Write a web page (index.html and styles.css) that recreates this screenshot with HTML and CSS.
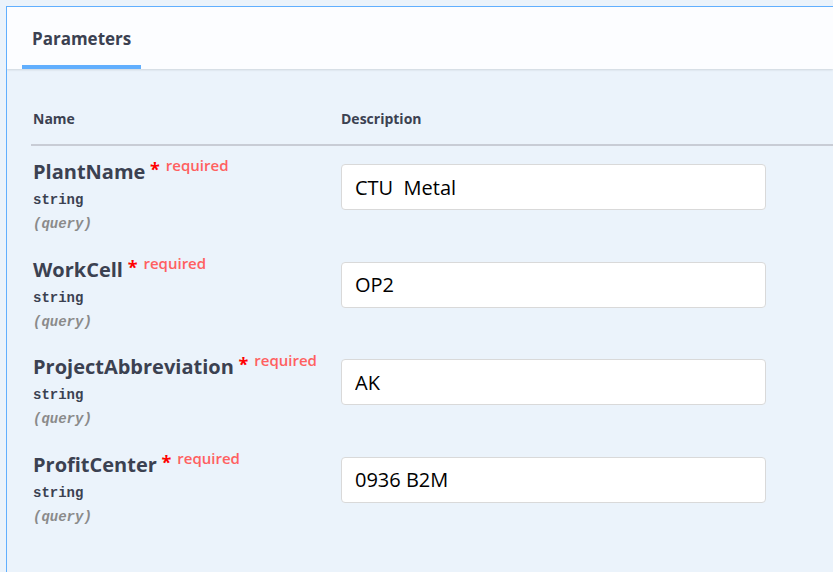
FILE: index.html
```html
<!DOCTYPE html>
<html>
<head>
<meta charset="utf-8">
<link rel="stylesheet" href="styles.css">
</head>
<body>
<div class="opblock">
  <div class="section-header">
    <div class="tab">Parameters</div>
  </div>
  <div class="params">
    <div class="thead">
      <div class="col-name">Name</div>
      <div class="col-desc">Description</div>
    </div>
    <div class="row">
      <div class="col-name">
        <div class="pname">PlantName<span class="star">&nbsp;*</span><span class="req">required</span></div>
        <div class="ptype">string</div>
        <div class="pin">(query)</div>
      </div>
      <div class="col-desc"><input class="field" type="text" value="CTU  Metal"></div>
    </div>
    <div class="row">
      <div class="col-name">
        <div class="pname">WorkCell<span class="star">&nbsp;*</span><span class="req">required</span></div>
        <div class="ptype">string</div>
        <div class="pin">(query)</div>
      </div>
      <div class="col-desc"><input class="field" type="text" value="OP2"></div>
    </div>
    <div class="row">
      <div class="col-name">
        <div class="pname">ProjectAbbreviation<span class="star">&nbsp;*</span><span class="req">required</span></div>
        <div class="ptype">string</div>
        <div class="pin">(query)</div>
      </div>
      <div class="col-desc"><input class="field" type="text" value="AK"></div>
    </div>
    <div class="row">
      <div class="col-name">
        <div class="pname">ProfitCenter<span class="star">&nbsp;*</span><span class="req">required</span></div>
        <div class="ptype">string</div>
        <div class="pin">(query)</div>
      </div>
      <div class="col-desc"><input class="field" type="text" value="0936 B2M"></div>
    </div>
  </div>
</div>
</body>
</html>
```
FILE: styles.css
```css
html, body {
  margin: 0;
  padding: 0;
  background: #ebf3fb;
  font-family: "Open Sans", "Noto Sans", sans-serif;
  color: #3b4151;
  overflow: hidden;
}
body {
  padding: 6px 0 0 6px;
  height: 572px;
  box-sizing: border-box;
}
.opblock {
  border-left: 1px solid #61affe;
  border-top: 1px solid #61affe;
  background: #ebf3fb;
  height: 100%;
  box-sizing: border-box;
  overflow: hidden;
}
.section-header {
  background: #fcfdff;
  height: 62px;
  box-shadow: 0 1px 2px rgba(0, 0, 0, 0.12);
  padding-left: 15px;
  display: flex;
  align-items: flex-end;
  position: relative;
}
.tab {
  font-size: 17px;
  font-weight: 700;
  padding: 0 10px 15px 10px;
  border-bottom: 4px solid #61affe;
  line-height: 22px;
}
.params {
  padding: 0 0 0 24px;
}
.thead {
  display: flex;
  height: 77px;
  align-items: flex-end;
  border-bottom: 2px solid #c8ccd5;
  font-size: 14px;
  font-weight: 700;
  box-sizing: border-box;
}
.thead > div {
  padding-bottom: 15px;
  line-height: 20px;
}
.col-name {
  width: 308px;
  padding-left: 2px;
  flex: none;
}
.col-desc {
  flex: 1;
}
.row {
  display: flex;
  height: 97.6px;
  padding-top: 14px;
  box-sizing: border-box;
}
.pname {
  font-size: 20px;
  font-weight: 700;
  line-height: 24px;
}
.star {
  color: #ff0000;
  font-size: 18px;
  position: relative;
  top: -3px;
}
.req {
  color: #ff6060;
  font-size: 15px;
  font-weight: 600;
  position: relative;
  top: -8px;
  margin-left: 6px;
}
.ptype {
  font-family: "Liberation Mono", "DejaVu Sans Mono", monospace;
  font-size: 14px;
  font-weight: 700;
  line-height: 24px;
  margin-top: 3px;
  color: #3b4151;
}
.pin {
  font-family: "Liberation Mono", "DejaVu Sans Mono", monospace;
  font-size: 14px;
  font-style: italic;
  font-weight: 700;
  color: #8a8a8a;
  line-height: 24px;
}
.field {
  display: block;
  box-sizing: border-box;
  width: 425px;
  height: 46px;
  margin-top: 4px;
  border: 1px solid #d9d9d9;
  border-radius: 4px;
  background: #fff;
  padding: 0 13px;
  font-family: "Open Sans", "Noto Sans", sans-serif;
  font-size: 20px;
  color: #000;
  outline: none;
}
```
